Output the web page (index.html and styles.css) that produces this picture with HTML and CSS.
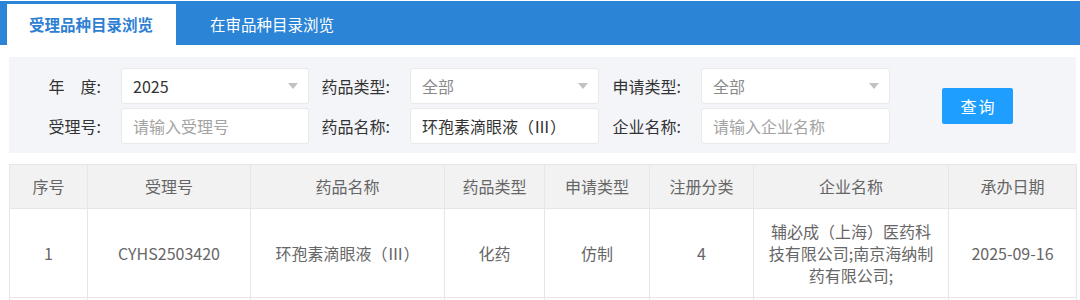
FILE: index.html
```html
<!DOCTYPE html>
<html lang="zh-CN">
<head>
    <meta charset="UTF-8">
    <meta name="viewport" content="width=device-width, initial-scale=1.0">
    <title>受理品种目录浏览</title>
    <link rel="stylesheet" href="styles.css">
</head>
<body>
    <div class="tab-bar">
        <div class="tab active">受理品种目录浏览</div>
        <div class="tab">在审品种目录浏览</div>
    </div>
    <div class="content">
        <div class="search-panel">
            <div class="search-grid">
                <label class="field-label">年　度:</label>
                <div class="select"><span class="select-value">2025</span><i class="arrow"></i></div>
                <label class="field-label">药品类型:</label>
                <div class="select"><span class="select-value placeholder">全部</span><i class="arrow"></i></div>
                <label class="field-label">申请类型:</label>
                <div class="select"><span class="select-value placeholder">全部</span><i class="arrow"></i></div>

                <label class="field-label" for="acceptNo">受理号:</label>
                <input class="text-input" type="text" id="acceptNo" placeholder="请输入受理号">
                <label class="field-label" for="drugName">药品名称:</label>
                <input class="text-input" type="text" id="drugName" value="环孢素滴眼液（Ⅲ）">
                <label class="field-label" for="company">企业名称:</label>
                <input class="text-input" type="text" id="company" placeholder="请输入企业名称">
            </div>
            <button class="search-btn">查询</button>
        </div>

        <table class="result-table">
            <colgroup>
                <col style="width: 78px">
                <col style="width: 163px">
                <col style="width: 194px">
                <col style="width: 100px">
                <col style="width: 105px">
                <col style="width: 104px">
                <col style="width: 195px">
                <col style="width: 128px">
            </colgroup>
            <thead>
                <tr>
                    <th>序号</th>
                    <th>受理号</th>
                    <th>药品名称</th>
                    <th>药品类型</th>
                    <th>申请类型</th>
                    <th>注册分类</th>
                    <th>企业名称</th>
                    <th>承办日期</th>
                </tr>
            </thead>
            <tbody>
                <tr>
                    <td>1</td>
                    <td>CYHS2503420</td>
                    <td>环孢素滴眼液（Ⅲ）</td>
                    <td>化药</td>
                    <td>仿制</td>
                    <td>4</td>
                    <td>辅必成（上海）医药科技有限公司;南京海纳制药有限公司;</td>
                    <td>2025-09-16</td>
                </tr>
                <tr class="empty-row">
                    <td></td><td></td><td></td><td></td><td></td><td></td><td></td><td></td>
                </tr>
            </tbody>
        </table>
    </div>
</body>
</html>
```

FILE: styles.css
```css
body {
    margin: 0;
    background: #fff;
    font-family: "Microsoft YaHei", "Noto Sans CJK SC", sans-serif;
    font-size: 16px;
    color: #333;
}
.tab-bar {
    display: flex;
    align-items: flex-end;
    gap: 12px;
    height: 44px;
    margin-top: 1px;
    padding-left: 7px;
    background-color: #2b84d6;
}
.tab {
    width: 125px;
    padding: 0 22px;
    height: 41px;
    line-height: 41px;
    font-size: 15.5px;
    color: #fff;
}
.tab.active {
    background: #fff;
    color: #2e7fd4;
    font-weight: bold;
}
.content {
    margin: 12px 4px 0 9px;
}
.search-panel {
    display: flex;
    align-items: center;
    padding: 11px 0 9px 11px;
    background-color: #f4f5f9;
}
.search-grid {
    display: grid;
    grid-template-columns: 101px 188px 101px 189px 102px 189px;
    grid-auto-rows: 36px;
    row-gap: 4px;
}
.field-label {
    padding-right: 20px;
    line-height: 36px;
    text-align: right;
    color: #333;
    white-space: nowrap;
}
.select, .text-input {
    box-sizing: border-box;
    height: 36px;
    border: 1px solid #e9e9e9;
    border-radius: 3px;
    background: #fff;
    font-family: inherit;
    font-size: 16px;
}
.select {
    display: flex;
    align-items: center;
    justify-content: space-between;
    padding: 0 10px 0 11px;
}
.select-value {
    color: #333;
}
.select-value.placeholder {
    color: #8a8a8a;
}
.arrow {
    width: 0;
    height: 0;
    border-top: 6px solid #c2c2c2;
    border-left: 5px solid transparent;
    border-right: 5px solid transparent;
}
.text-input {
    width: 100%;
    padding: 0 11px;
    color: #333;
    outline: none;
}
.text-input::placeholder {
    color: #a3a3a3;
}
.search-btn {
    width: 71px;
    height: 36px;
    margin-left: 52px;
    border: none;
    border-radius: 2px;
    background-color: #1e9fff;
    color: #fff;
    font-family: inherit;
    font-size: 16px;
    letter-spacing: 2px;
    text-indent: 2px;
}
.result-table {
    width: 1067px;
    margin-top: 11px;
    table-layout: fixed;
    border-collapse: collapse;
}
.result-table th, .result-table td {
    border: 1px solid #e6e6e6;
    padding: 10px 14px;
    text-align: center;
    color: #666;
    font-weight: normal;
}
.result-table th {
    line-height: 23px;
    background-color: #f2f2f2;
}
.result-table td {
    line-height: 22px;
    padding: 11px 14px;
}
.empty-row td {
    height: 40px;
}
```
